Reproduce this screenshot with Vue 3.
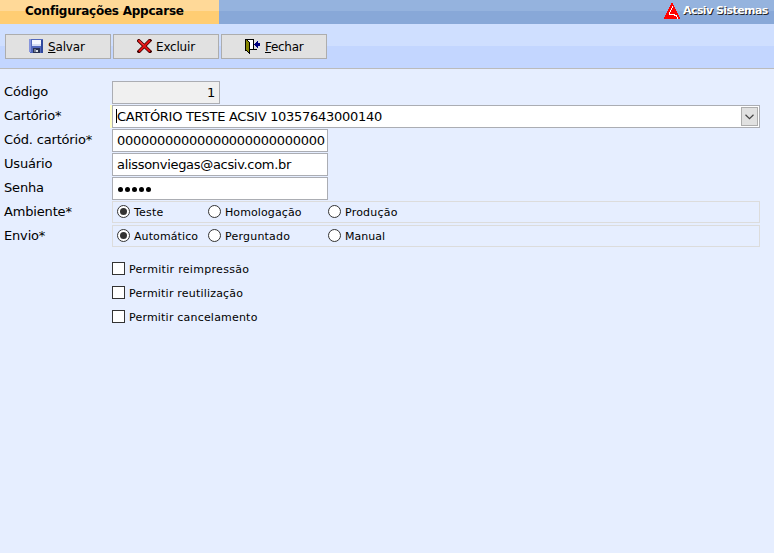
<script setup>
import { ref } from 'vue'

const ambiente = ref('Teste')
const envio = ref('Automático')
const groups = [
  { label: 'Ambiente*', model: ambiente, options: [{ t: 'Teste', c: 'teste' }, { t: 'Homologação', c: 'homo' }, { t: 'Produção', c: 'prod' }] },
  { label: 'Envio*', model: envio, options: [{ t: 'Automático', c: 'auto' }, { t: 'Perguntado', c: 'perg' }, { t: 'Manual', c: 'manual' }] }
]
const checks = ref([
  { t: 'Permitir reimpressão', on: false },
  { t: 'Permitir reutilização', on: false },
  { t: 'Permitir cancelamento', on: false }
])
</script>

<template>
  <div class="window">
    <header class="titlebar">
      <div class="tab">Configurações Appcarse</div>
      <div class="brand">
        <svg width="16" height="16" viewBox="0 0 16 16" shape-rendering="crispEdges">
          <path d="M7 0H9V2H10V4H11V6H12V8H13V10H14V12H15V14H16V16H0V14H1V12H2V10H3V8H4V6H5V4H6V2H7Z" fill="#f00" />
          <path d="M8 3H9V5H8V7H7V9H6V11H11V12H13V14H14V16H13V14H12V13H10V12H5V9H6V7H7V5H8Z" fill="#fff" />
        </svg>
        <span>Acsiv Sistemas</span>
      </div>
    </header>

    <nav class="toolbar">
      <button class="btn">
        <svg width="14" height="14" viewBox="0 0 14 14" shape-rendering="crispEdges">
          <path d="M0 0H14V14H1L0 13Z" fill="#5369bd" />
          <path d="M0 0H2V13H0Z" fill="#8795dc" />
          <path d="M12 1H14V14H12Z" fill="#30489d" />
          <path d="M3 1H12V7H3Z" fill="#f5f8ff" />
          <path d="M3 5H12V7H3Z" fill="#d5def5" />
          <path d="M4 9H11V14H4Z" fill="#273052" />
          <path d="M5 10H7V13H5Z" fill="#777f91" />
          <path d="M7 11H9V13H7Z" fill="#d9e0e8" />
        </svg>
        <span class="salvar"><u>S</u>alvar</span>
      </button>
      <button class="btn">
        <svg class="x" width="15" height="14" viewBox="0 0 15 14">
          <path d="M1.8 1.8L13 12.5M12.8 1.5L2 12.5" stroke="#380000" stroke-width="3.4" stroke-linecap="square" />
          <path d="M1.3 1.3L13 12.5M13 1.3L2 12.5" stroke="#e01010" stroke-width="2" />
          <path d="M2 1.5L6.5 6" stroke="#ff6060" stroke-width=".8" />
        </svg>
        <span class="excluir">Excluir</span>
      </button>
      <button class="btn">
        <svg class="door" width="16" height="15" viewBox="0 0 16 15" shape-rendering="crispEdges">
          <path d="M1 0H9V10H12V11H5V11H1Z" fill="#000" />
          <path d="M3 1H8V10H5V3H4V2H3Z" fill="#fff" />
          <path d="M0 0H1V1H2V2H3V3H4V4H5V15H4V14H3V13H2V12H0Z" fill="#000" />
          <path d="M1 1H2V2H3V3H4V13H3V12H2V11H1Z" fill="#858500" />
          <path d="M9 5H10V4H11V3H12V2H13V4H15V7H13V9H12V8H11V7H10V6H9Z" fill="#000080" />
        </svg>
        <span class="fechar"><u>F</u>echar</span>
      </button>
    </nav>

    <main class="form">
      <div class="row"><label>Código</label><div class="field code"><span>1</span></div></div>
      <div class="row">
        <label>Cartório*</label>
        <div class="field combo">
          <i class="caret"></i><span>CARTÓRIO TESTE ACSIV 10357643000140</span>
          <button class="drop">
            <svg width="9" height="6" viewBox="0 0 9 6"><path d="M.5 .7L4.5 4.6L8.5 .7" fill="none" stroke="#444" stroke-width="1.2" /></svg>
          </button>
        </div>
      </div>
      <div class="row"><label>Cód. cartório*</label><div class="field"><span class="zeros">00000000000000000000000000</span></div></div>
      <div class="row"><label>Usuário</label><div class="field"><span class="mail">alissonviegas@acsiv.com.br</span></div></div>
      <div class="row"><label>Senha</label><div class="field dots"><i v-for="n in 5" :key="n"></i></div></div>
      <div v-for="g in groups" :key="g.label" class="row">
        <label>{{ g.label }}</label>
        <div class="group">
          <div v-for="o in g.options" :key="o.t" class="radio" @click="g.model.value = o.t">
            <i :class="{ on: g.model.value === o.t }"></i><span :class="o.c">{{ o.t }}</span>
          </div>
        </div>
      </div>
      <div class="checks">
        <div v-for="c in checks" :key="c.t" class="check" @click="c.on = !c.on">
          <i :class="{ on: c.on }"></i><span>{{ c.t }}</span>
        </div>
      </div>
    </main>
  </div>
</template>

<style>
body { background: #e6eeff; }
</style>

<style scoped>
.window { height: 553px; overflow: hidden; background: #e6eeff; color: #000; font: 13px/16px "DejaVu Sans", sans-serif; white-space: nowrap; }
.window * { box-sizing: border-box; }
.titlebar { display: flex; justify-content: space-between; height: 24px; background: linear-gradient(#95b3de 11px, #88a8d8 11px); }
.tab { width: 219px; padding: 3px 0 0 25px; background: linear-gradient(#ffd998 11px, #ffcd73 11px); font-weight: bold; font-size: 12px; letter-spacing: -.23px; }
.brand { display: flex; gap: 3px; width: 110px; padding-top: 3px; color: #fff; font-weight: bold; font-size: 11px; line-height: 15px; letter-spacing: -.57px; text-shadow: 1px 1px 0 #222; }
.brand svg { flex: none; }
.toolbar { display: flex; gap: 2px; height: 45px; padding: 10px 5px; background: linear-gradient(#cfdfff 22px, #c3d6ff 22px); border-bottom: 1px solid #bbb; }
.btn { display: flex; align-items: flex-start; width: 106px; height: 25px; padding: 4px 0 0 23px; border: 1px solid #adadad; background: #e1e1e1; font: 12px/17px "DejaVu Sans", sans-serif; color: #000; }
.btn span { margin-left: 5px; }
.btn u { text-underline-offset: 1px; }
.btn .x { margin-right: -1px; }
.btn .salvar { letter-spacing: -.15px; }
.btn .excluir { letter-spacing: -.2px; }
.btn .fechar { margin-left: 4px; letter-spacing: -.3px; }
.form { padding: 12px 0 0 4px; }
.row { display: flex; height: 24px; }
.row label { width: 108px; padding-top: 3px; letter-spacing: -.17px; }
.field { display: flex; width: 216px; height: 23px; padding: 3px 4px 0; border: 1px solid #abadb3; background: #fff; letter-spacing: -.28px; }
.code { width: 108px; justify-content: flex-end; padding-right: 4px; background: #f0f0f0; }
.combo { width: 648px; padding-right: 1px; box-shadow: -2px 0 0 #ffffc8; }
.caret { width: 1px; height: 14px; margin: 0 0 0 -1px; background: #000; }
.drop { display: flex; align-items: center; justify-content: center; width: 17px; height: 19px; margin: -2px 0 0 auto; padding: 0; border: 1px solid #adadad; background: #e1e1e1; }
.mail { letter-spacing: -.31px; }
.dots { gap: 2px; padding: 9px 4px 0 5px; }
.dots i { width: 5px; height: 5px; border-radius: 50%; background: #000; }
.group { display: flex; width: 648px; height: 22px; padding: 3px 0 0 4px; border: 1px solid #dcdcdc; }
.radio { display: flex; width: 120px; font-size: 11px; line-height: 15px; }
.radio:first-child { width: 91px; }
.radio i { display: flex; align-items: center; justify-content: center; width: 13px; height: 13px; margin-right: 4px; border: 1px solid #333; border-radius: 50%; background: #fff; }
.radio i.on::after { content: ""; width: 7px; height: 7px; border-radius: 50%; background: #333; }
.radio .teste, .radio .prod, .radio .perg { letter-spacing: .22px; }
.radio .homo, .radio .auto { letter-spacing: .1px; }
.checks { padding: 9px 0 0 108px; }
.check { display: flex; height: 24px; padding-top: 4px; font-size: 11px; line-height: 15px; letter-spacing: .2px; }
.check:first-child { letter-spacing: .3px; }
.check i { width: 13px; height: 13px; margin-right: 4px; border: 1px solid #333; background: #fff; }
.check i.on { box-shadow: inset 0 0 0 2px #fff; background: #333; }
</style>
